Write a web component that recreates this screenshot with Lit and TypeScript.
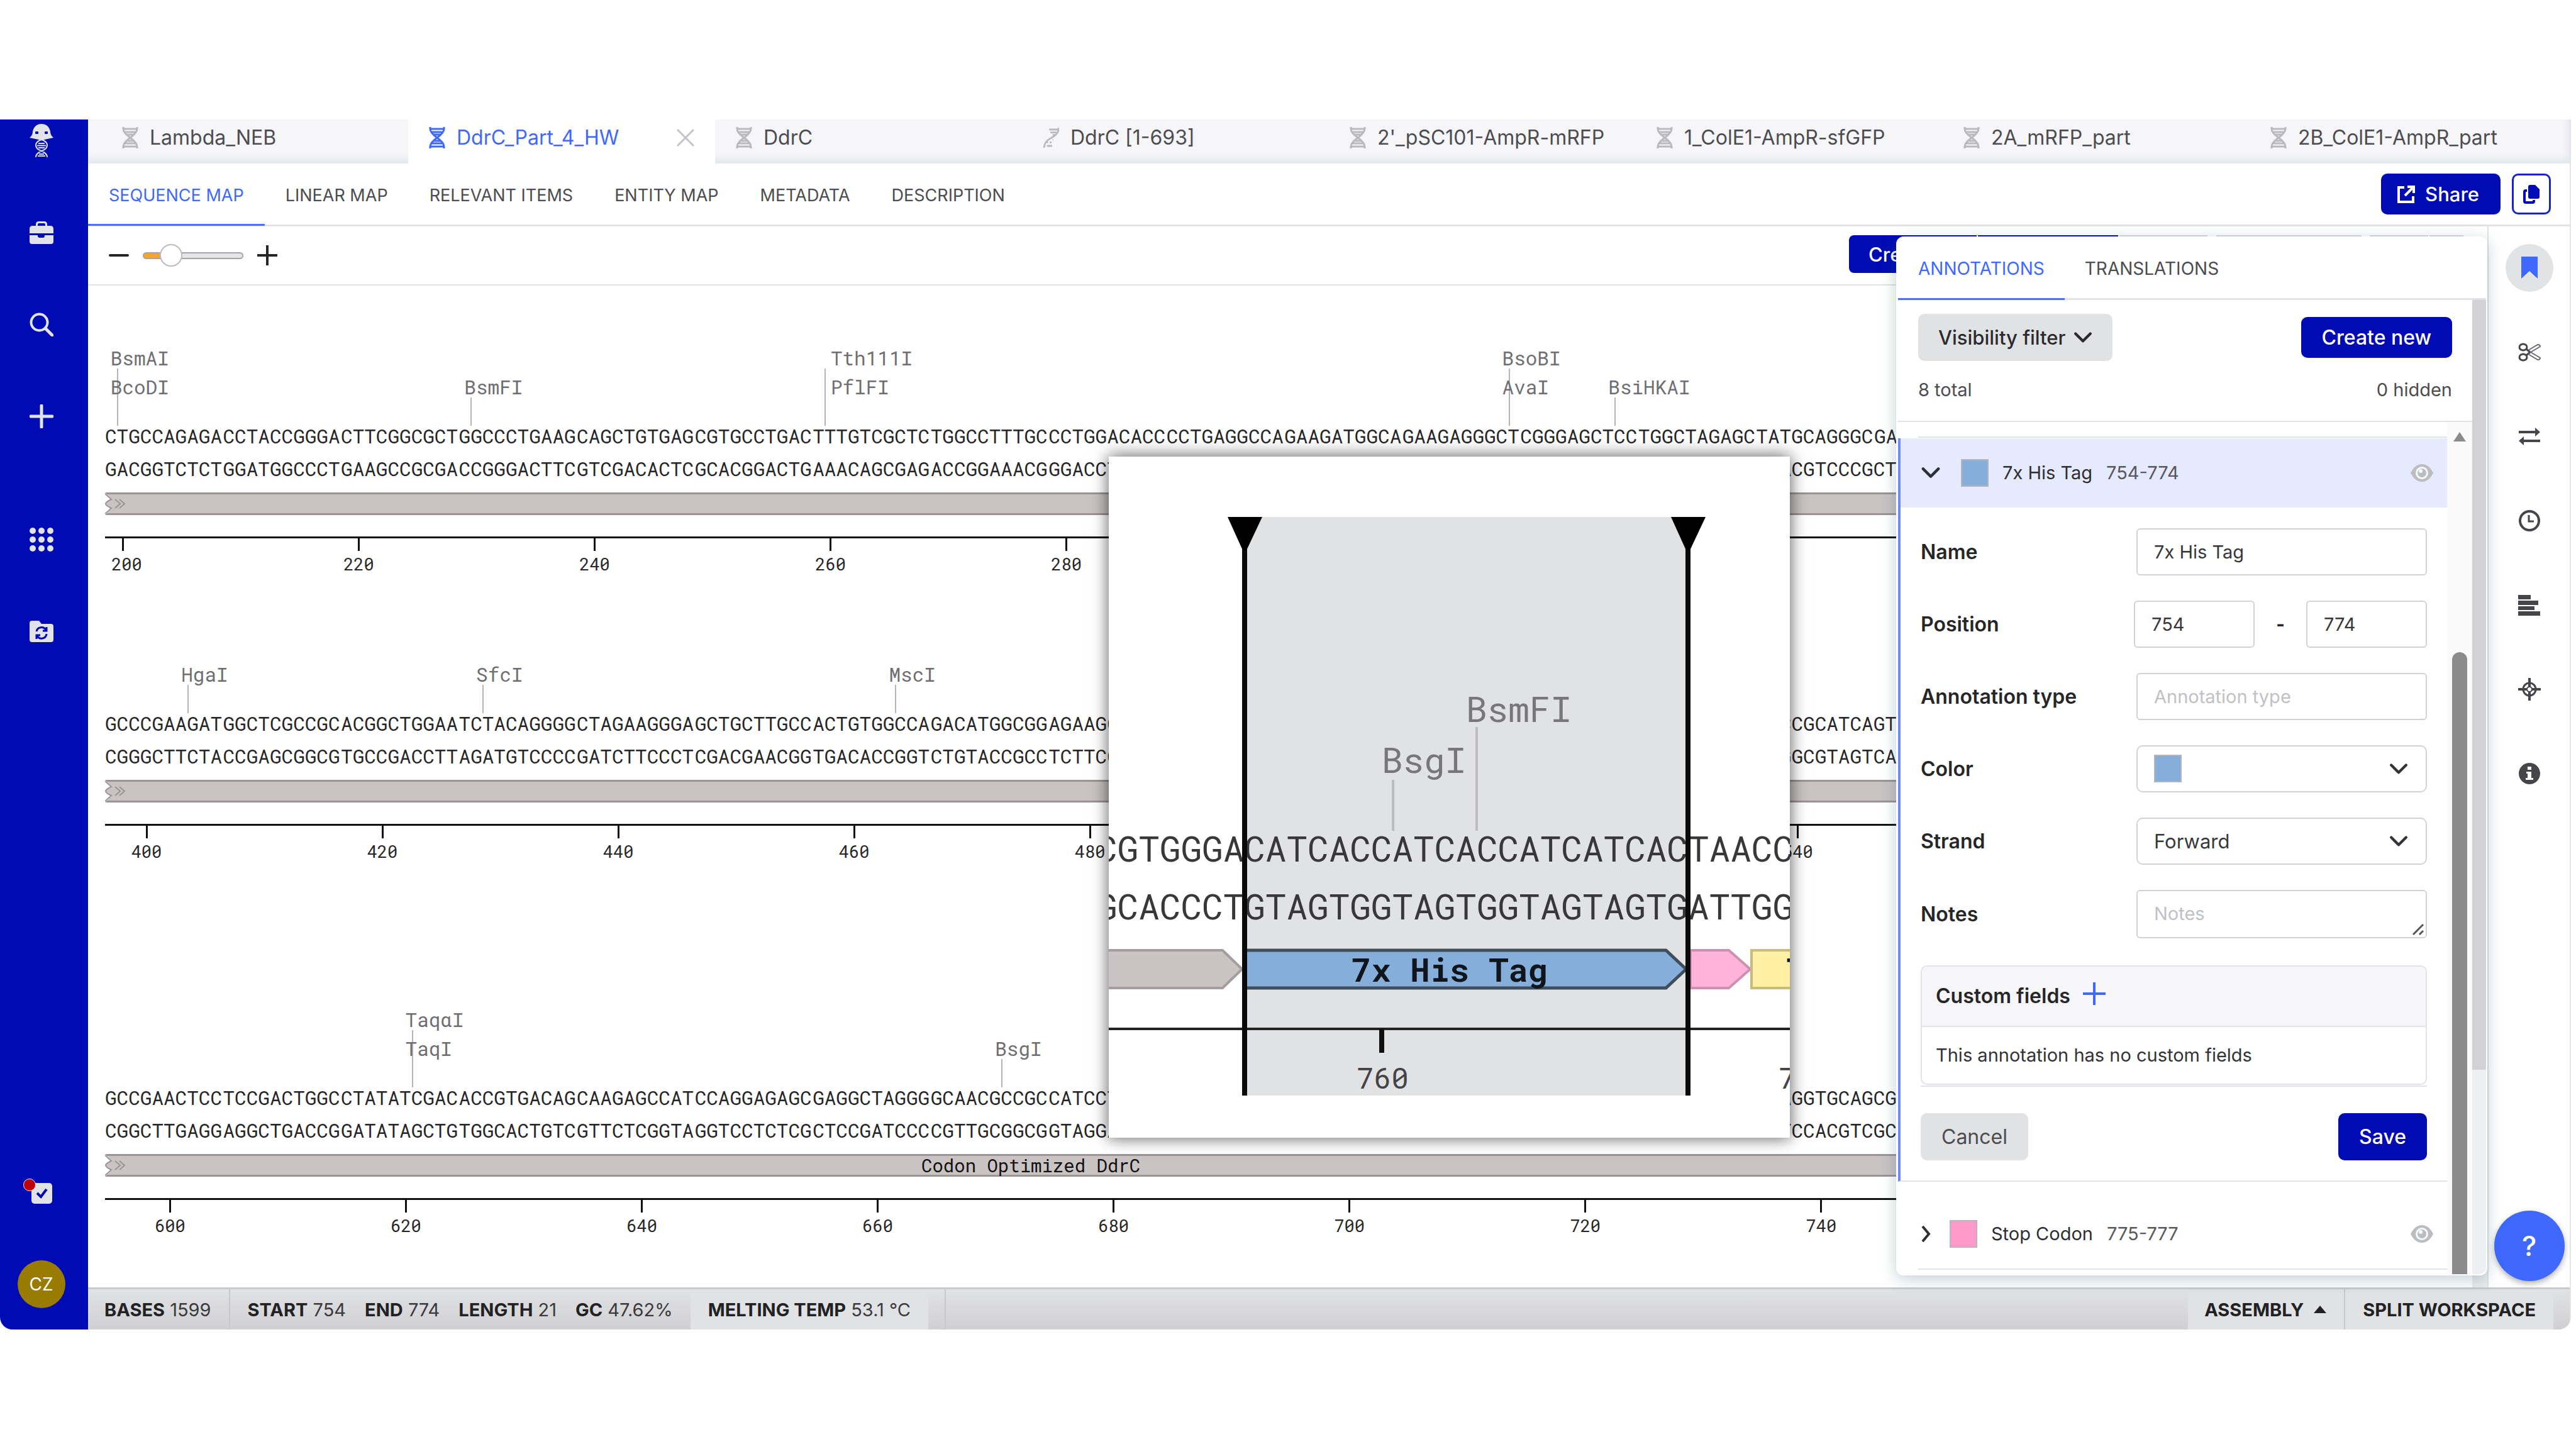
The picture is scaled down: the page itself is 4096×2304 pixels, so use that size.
import { LitElement, html, css, svg, nothing } from "lit";
import { customElement, state } from "lit/decorators.js";
import { classMap } from "lit/directives/class-map.js";

const BASES_PER_ROW = 198;

interface Site {
  at: number;
  names: string[];
  after?: boolean;
}

interface Row {
  size: string;
  top: [number, string][];
  bottom: [number, string][];
  sites: Site[];
  barSpan: number;
  barLabel?: string;
  ticks: [number, number][];
}

const PAIR: Record<string, string> = { A: "T", T: "A", C: "G", G: "C" };
const complement = (s: string) => [...s].map((b) => PAIR[b]).join("");

const ROW_1 =
  "CTGCCAGAGACCTACCGGGACTTCGGCGCTGGCCCTGAAGCAGCTGTGAGCGTGCCTGACTTTGTCGCTCTGGCCTTTGC" +
  "CCTGGACACCCCTGAGGCCAGAAGATGGCAGAAGAGGGCTCGGGAGCTCCTGGCTAGAGCTATGCAGGGCGA";
const ROW_2 =
  "GCCCGAAGATGGCTCGCCGCACGGCTGGAATCTACAGGGGCTAGAAGGGAGCTGCTTGCCACTGTGGCCAGACATGGCGGAGAAGC";
const ROW_3 =
  "GCCGAACTCCTCCGACTGGCCTATATCGACACCGTGACAGCAAGAGCCATCCAGGAGAGCGAGGCTAGGGGCAACGCCGCCATCCT";

const pairStrand = (parts: [number, string][]): [number, string][] =>
  parts.map(([start, s]) => [start, complement(s)]);

const ROW_2_PARTS: [number, string][] = [[0, ROW_2], [142, "CCGCATCAGT"]];
const ROW_3_PARTS: [number, string][] = [[0, ROW_3], [142, "AGGTGCAGCG"]];

const ROWS: Row[] = [
  {
    size: "first",
    top: [[0, ROW_1]],
    bottom: pairStrand([[0, ROW_1.slice(0, 86)], [142, ROW_1.slice(142)]]),
    sites: [
      { at: 1, names: ["BsmAI", "BcoDI"] },
      { at: 31, names: ["BsmFI"] },
      { at: 61, names: ["Tth111I", "PflFI"], after: true },
      { at: 119, names: ["BsoBI", "AvaI"] },
      { at: 128, names: ["BsiHKAI"] },
    ],
    barSpan: 198,
    ticks: [[1, 200], [21, 220], [41, 240], [61, 260], [81, 280]],
  },
  {
    size: "second",
    top: ROW_2_PARTS,
    bottom: pairStrand(ROW_2_PARTS),
    sites: [
      { at: 7, names: ["HgaI"] },
      { at: 32, names: ["SfcI"] },
      { at: 67, names: ["MscI"] },
    ],
    barSpan: 198,
    ticks: [[3, 400], [23, 420], [43, 440], [63, 460], [83, 480], [143, 540]],
  },
  {
    size: "third",
    top: ROW_3_PARTS,
    bottom: pairStrand(ROW_3_PARTS),
    sites: [
      { at: 26, names: ["TaqαI", "TaqI"] },
      { at: 76, names: ["BsgI"] },
    ],
    barSpan: 157,
    barLabel: "Codon Optimized DdrC",
    ticks: [[5, 600], [25, 620], [45, 640], [65, 660], [85, 680], [105, 700], [125, 720], [145, 740]],
  },
];

const FILES = [
  "Lambda_NEB",
  "DdrC_Part_4_HW",
  "DdrC",
  "DdrC [1-693]",
  "2'_pSC101-AmpR-mRFP",
  "1_ColE1-AmpR-sfGFP",
  "2A_mRFP_part",
  "2B_ColE1-AmpR_part",
];

const VIEWS = ["SEQUENCE MAP", "LINEAR MAP", "RELEVANT ITEMS", "ENTITY MAP", "METADATA", "DESCRIPTION"];

const helix = html`<svg class="helix" viewBox="0 0 26 34" aria-hidden="true">
  <path d="M2 0V3Q2 9 13 17Q24 25 24 31V34M24 0V3Q24 9 13 17Q2 25 2 31V34M1 3H25M4 8H22M7 12H19M7 22H19M4 26H22M1 31H25" />
</svg>`;

const halfHelix = html`<svg class="helix" viewBox="0 0 28 34" aria-hidden="true">
  <path d="M27 0V4Q26 11 15 17Q3 23 2 34M11 3H26M13 8H24M17 12H21M7 25H9M12 25H15M7 31H16M17 20H18" />
</svg>`;

const eye = html`<svg class="eye" viewBox="0 0 36 28" aria-hidden="true">
  <path d="M0 14Q7 0 18 0T36 14Q29 28 18 28T0 14Z" fill="currentColor" />
  <circle cx="18" cy="14" r="10" fill="#f7f8fc" />
  <circle cx="18" cy="14" r="7" fill="currentColor" />
  <circle cx="16" cy="11" r="3" fill="#f7f8fc" />
</svg>`;

const chevron = (cls: string) => html`<svg class=${cls} viewBox="0 0 28 18" aria-hidden="true">
  <path d="M3 3L14 14L25 3" fill="none" stroke="currentColor" stroke-width="4" stroke-linecap="round" stroke-linejoin="round" />
</svg>`;

const SIDE_ICONS = {
  logo: html`<svg viewBox="0 0 38 54" class="logo" aria-hidden="true">
    <path d="M0 22Q5 18 5 12Q8 0 19 0T33 12Q33 18 38 22Q28 24 19 26Q10 24 0 22Z" fill="#e1e3e6" />
    <rect x="9" y="12" width="5" height="4" rx="1" fill="#000bb4" />
    <rect x="24" y="12" width="5" height="4" rx="1" fill="#000bb4" />
    <path d="M19 25Q10 28 10 34T19 43Q28 47 28 53M19 25Q28 28 28 34T19 43Q10 47 10 53M14 31H24M12 34.500H26M14 38H24M15 48H23M13 51H25" fill="none" stroke="#e1e3e6" stroke-width="2" />
  </svg>`,
  projects: html`<svg viewBox="0 0 38 36" class="i38" aria-hidden="true">
    <path d="M10 7V5Q10 0 15 0H23Q28 0 28 5V7H33Q38 7 38 12V19H0V12Q0 7 5 7ZM13 7H25V5Q25 3 23 3H15Q13 3 13 5ZM0 22H13V23Q13 26 16 26H21Q24 26 24 23V22H38V32Q38 36 34 36H4Q0 36 0 32Z" fill="#e1e3e6" fill-rule="evenodd" />
  </svg>`,
  search: html`<svg viewBox="0 0 38 38" class="i38" aria-hidden="true">
    <circle cx="15.500" cy="15.500" r="13" fill="none" stroke="#e1e3e6" stroke-width="4" />
    <path d="M25 25L36 36" stroke="#e1e3e6" stroke-width="5" stroke-linecap="round" />
  </svg>`,
  create: html`<svg viewBox="0 0 38 38" class="i38" aria-hidden="true">
    <path d="M19 2V36M2 19H36" stroke="#e1e3e6" stroke-width="5" stroke-linecap="round" />
  </svg>`,
  apps: html`<svg viewBox="0 0 38 38" class="i38" aria-hidden="true">
    ${[5, 19, 33].map((y) => [5, 19, 33].map((x) => svg`<circle cx=${x} cy=${y} r="5" fill="#e1e3e6"/>`))}
  </svg>`,
  sync: html`<svg viewBox="0 0 38 34" class="i38" aria-hidden="true">
    <path d="M4 0H15L19 5H34Q38 5 38 9V30Q38 34 34 34H4Q0 34 0 30V4Q0 0 4 0Z" fill="#e1e3e6" />
    <path d="M11 17A8 8 0 0 1 26 15M27 21A8 8 0 0 1 12 24M27 10V16H21M11 29V23H17" fill="none" stroke="#000bb4" stroke-width="3" />
  </svg>`,
  tasks: html`<svg viewBox="0 0 46 40" class="tasks" aria-hidden="true">
    <rect x="13" y="7" width="33" height="33" rx="5" fill="#e1e3e6" />
    <path d="M22 23L28 29L37 17" fill="none" stroke="#000bb4" stroke-width="4" />
    <circle cx="10" cy="10" r="9.500" fill="#c00008" stroke="#e1e3e6" stroke-width="1" />
  </svg>`,
};

const RAIL_ICONS: [string, unknown][] = [
  ["Annotations", html`<svg viewBox="0 0 36 36" class="i36" aria-hidden="true"><path d="M5 0H31V35L18 23L5 35Z" fill="#3f68ff" /></svg>`],
  ["Restriction enzymes", html`<svg viewBox="0 0 36 36" class="i36" aria-hidden="true">
    <g fill="none" stroke="#45464a" stroke-width="3"><ellipse cx="8" cy="10" rx="6" ry="5" /><ellipse cx="8" cy="26" rx="6" ry="5" /><path d="M13 13L19 18L13 23" /></g>
    <g fill="none" stroke="#6d6e72" stroke-width="2"><path d="M16 15L31 6Q35 6 35 9L20 18L35 27Q35 30 31 30L16 21" /></g></svg>`],
  ["Translations", html`<svg viewBox="0 0 36 36" class="i36" aria-hidden="true"><path d="M1 9H27V4L35 11L27 18V13H1ZM35 23H9V18L1 25L9 32V27H35Z" fill="#45464a" /></svg>`],
  ["History", html`<svg viewBox="0 0 36 36" class="i36" aria-hidden="true"><circle cx="18" cy="18" r="15" fill="none" stroke="#45464a" stroke-width="4" /><path d="M17 9V19H25" fill="none" stroke="#45464a" stroke-width="3" /></svg>`],
  ["Alignments", html`<svg viewBox="0 0 36 36" class="i36" aria-hidden="true"><path d="M0 2H20V9H0ZM0 11H32V18H0ZM0 20H26V26H0ZM0 28H35V35H0Z" fill="#45464a" /></svg>`],
  ["Design", html`<svg viewBox="0 0 36 36" class="i36" aria-hidden="true"><g fill="none" stroke="#45464a"><circle cx="18" cy="18" r="10" stroke-width="3" /><path d="M18 0V14M18 22V36M0 18H14M22 18H36" stroke-width="4" /><circle cx="18" cy="18" r="4" stroke-width="2" /></g></svg>`],
  ["Information", html`<svg viewBox="0 0 36 36" class="i36" aria-hidden="true"><circle cx="18" cy="18" r="17" fill="#45464a" /><path d="M15 7H21V12H15ZM13 15H21V25H24V28H12V25H15V18H13Z" fill="#fff" /></svg>`],
];

@customElement("sequence-row")
class SequenceRow extends LitElement {
  static properties = { row: { attribute: false } };
  declare row: Row;

  static styles = css`
    :host { display: block; font-family: "Roboto Mono", "DejaVu Sans Mono", monospace; color: #262628; }
    .sites { position: relative; }
    .first { height: 213px; }
    .second { height: 212px; }
    .third { height: 350px; }
    .site { position: absolute; bottom: -10px; width: 2px; height: 45px; background: #b4b5b9; }
    .double { height: 91px; }
    .names { position: absolute; bottom: 39px; left: -10px; font-size: 31px; line-height: 46px; color: #6f6f73; white-space: nowrap; }
    .after { left: 10px; }
    .bases { display: grid; grid-template-columns: repeat(198, minmax(0, 1fr)); }
    .strand { font-size: 31px; line-height: 52px; white-space: nowrap; }
    .bar { grid-column-start: 1; position: relative; box-sizing: border-box; height: 36px; margin-top: 12px; border: solid #9a9494; border-width: 3px 0; background: #c9c3c3; display: flex; align-items: center; justify-content: center; font-size: 29px; line-height: 30px; color: #111; }
    .torn { position: absolute; left: 0; top: -3px; width: 36px; height: 36px; }
    .ruler { margin-top: 34px; border-top: 3px solid #111; height: 56px; position: relative; }
    .tick { position: absolute; top: 0; width: 3px; height: 20px; margin-left: -1px; background: #111; }
    .num { position: absolute; top: 25px; left: -23px; font-size: 27px; line-height: 32px; }
    .start { left: -17px; }
  `;

  private strand(parts: [number, string][]) {
    return html`<div class="bases strand">
      ${parts.map(([start, s]) =>
        (s.match(/.{1,10}/g) ?? []).map(
          (group, i) => html`<span style="grid-column:${start + i * 10 + 1} / span ${group.length}">${group}</span>`,
        ),
      )}
    </div>`;
  }

  render() {
    const r = this.row;
    return html`
      <div class="sites ${r.size}">
        ${r.sites.map(
          (s) => html`<div class=${classMap({ site: true, double: s.names.length > 1 })} style="left:${(s.at / BASES_PER_ROW) * 100}%">
            <div class=${classMap({ names: true, after: !!s.after })}>${s.names.map((n) => html`<div>${n}</div>`)}</div>
          </div>`,
        )}
      </div>
      ${this.strand(r.top)} ${this.strand(r.bottom)}
      <div class="bases">
        <div class="bar" style="grid-column-end:span ${r.barSpan}">
          <svg class="torn" viewBox="0 0 36 36" aria-hidden="true">
            <path d="M-2 0H0L11 11Q1 15 1 18T11 25L0 36H-2Z" fill="#fff" />
            <path d="M0 2L10 11Q1 15 1 18T10 25L0 34M16 11L24 18L16 25M23 11L31 18L23 25" fill="none" stroke="#9a9494" stroke-width="2" />
          </svg>
          ${r.barLabel ?? nothing}
        </div>
      </div>
      <div class="ruler">
        ${r.ticks.map(
          ([at, n]) => html`<div class="tick" style="left:${((at + 0.5) / BASES_PER_ROW) * 100}%">
            <span class=${classMap({ num: true, start: at < 2 })}>${n}</span>
          </div>`,
        )}
      </div>
    `;
  }
}

@customElement("selection-lens")
class SelectionLens extends LitElement {
  static styles = css`
    :host { display: block; background: #fff; box-shadow: 0 -2px 26px rgba(0, 0, 0, 0.5), 0 4px 20px rgba(0, 0, 0, 0.2); }
    svg { display: block; width: 100%; }
    text { font-family: "Roboto Mono", "DejaVu Sans Mono", monospace; font-size: 56px; fill: #38383b; }
    .site { fill: #77777b; }
    .tag { font-size: 52px; font-weight: 700; fill: #10151c; }
    .num { font-size: 46px; fill: #444447; }
  `;

  render() {
    return html`<svg viewBox="0 0 1083 1083" role="img" aria-label="Selected bases 754 to 774">
      <rect x="216" y="96" width="705" height="920" fill="#e1e2e4" />
      <path d="M452 514V595M585 430V595" stroke="#bcbcbf" stroke-width="4" />
      <text class="site" x="568" y="422">BsmFI</text>
      <text class="site" x="434" y="503">BsgI</text>
      <text x="-20" y="644">CGTGGGACATCACCATCACCATCATCACTAACC</text>
      <text x="-20" y="736">GCACCCTGTAGTGGTAGTGGTAGTAGTGATTGG</text>
      <path d="M-4 785H181L212 815L181 845H-4Z" fill="#c9c3c3" stroke="#a39d9d" stroke-width="4" />
      <path d="M216 785H886L918 815L886 845H216Z" fill="#85aedb" stroke="#3f4d5c" stroke-width="5" />
      <path d="M925 785H986L1020 815L986 845H925Z" fill="#ffb3d9" stroke="#cf8fb0" stroke-width="4" />
      <rect x="1022" y="785" width="70" height="60" fill="#fff0a6" stroke="#c9bc78" stroke-width="4" />
      <text class="tag" x="386" y="835">7x His Tag</text>
      <text class="tag" x="1078" y="835">T</text>
      <path d="M0 910H1083" stroke="#222" stroke-width="4" />
      <path d="M434 910V948" stroke="#111" stroke-width="8" />
      <text class="num" x="394" y="1005">760</text>
      <text class="num" x="1065" y="1005">7</text>
      <path d="M216 96V1016M921 96V1016" stroke="#0a0a0a" stroke-width="8" />
      <path d="M189 96H244L219 149H213ZM894 96H949L924 149H918Z" fill="#000" />
    </svg>`;
  }
}

@customElement("annotation-panel")
class AnnotationPanel extends LitElement {
  static styles = css`
    :host { display: flex; flex-direction: column; box-sizing: border-box; background: #fff; border-radius: 12px; border: solid #fff; border-width: 0 2px 2px 3px; box-shadow: 0 6px 24px rgba(30, 90, 100, 0.28); overflow: hidden; font-size: 29px; line-height: 40px; color: #333338; }
    button, input, select, textarea { font: inherit; color: inherit; margin: 0; }
    button { cursor: pointer; }
    .tabs { display: flex; border-bottom: 3px solid #e1e3e6; }
    .tab { border: 0; background: none; padding: 4px 32px 0; height: 101px; font-size: 28px; color: #4c4c51; border-bottom: 3px solid transparent; margin-bottom: -3px; }
    .tab.on { color: #3f68ff; border-color: #4a70ff; }
    .outer { flex: 1; min-height: 0; display: flex; }
    .content { flex: 1; min-width: 0; display: flex; flex-direction: column; }
    .track { width: 22px; background: #eeeff1; }
    .track div { height: 79%; background: #d2d2d5; }
    .head { padding: 22px 32px 0; height: 170px; display: flex; flex-direction: column; gap: 26px; border-bottom: 2px solid #e1e3e6; }
    .line { display: flex; align-items: center; justify-content: space-between; color: #4c4c51; }
    .btn { border: 0; border-radius: 10px; font-size: 32px; padding: 0 33px; height: 75px; background: #e1e2e4; color: #4c4c51; display: flex; align-items: center; gap: 12px; }
    .filter { color: #2b2b2f; font-weight: 500; font-size: 31px; padding: 0 32px; }
    .primary { background: #000bb4; color: #fff; font-weight: 500; }
    .short { height: 65px; }
    .list { flex: 1; min-height: 0; display: flex; }
    .items { flex: 1; min-width: 0; overflow: hidden; }
    .rule { margin: 23px 0 0 32px; border-top: 2px solid #e1e3e6; height: 1px; }
    .open { border-left: 4px solid #7089ff; border-bottom: 2px solid #e1e3e6; }
    .title { display: flex; align-items: center; }
    .open .title { height: 110px; background: #e6eafe; padding: 0 22px 0 32px; }
    .next { height: 110px; margin-left: 32px; padding: 28px 22px 0 4px; border-bottom: 2px solid #e1e3e6; }
    .toggle { border: 0; background: none; padding: 0; display: flex; align-items: center; height: 44px; color: #2f2f33; text-align: left; }
    .swatch { width: 40px; height: 40px; border: 2px solid #b5b5ba; background: #85aedb; }
    .pink { background: #ff9acb; }
    .open .toggle .swatch { margin: 0 22px 0 32px; }
    .next .swatch { margin: 0 22px 0 30px; }
    .range { margin-left: 22px; color: #58585d; }
    .see { margin-left: auto; border: 0; background: none; padding: 0; color: #bcbdc1; display: flex; }
    .eye { width: 36px; height: 28px; }
    .down { width: 32px; height: 20px; }
    .mid { width: 30px; height: 20px; }
    .right { width: 16px; height: 28px; }
    form { padding: 33px 32px 32px; display: flex; flex-direction: column; }
    .fields { display: grid; grid-template-columns: 343px minmax(0, 1fr); gap: 40px 0; align-items: center; }
    label, .cap { font-weight: 600; font-size: 32px; color: #262629; }
    input, select, textarea { display: block; box-sizing: border-box; width: 100%; height: 75px; border: 2px solid #d2d3d6; border-radius: 6px; padding: 0 26px; background: #fff; outline: 0; color: #38383c; appearance: none; }
    select { border-radius: 10px; font-size: 31px; }
    textarea { height: 77px; padding: 16px 26px; resize: none; overflow: hidden; }
    ::placeholder { color: #c0c1c5; opacity: 1; }
    .pos { display: flex; align-items: center; justify-content: space-between; margin-left: -4px; font-weight: 700; color: #262629; }
    .pos input { width: 192px; font-weight: 400; }
    .wrap { position: relative; }
    .wrap .swatch { position: absolute; left: 28px; top: 15px; }
    .wrap .mid { position: absolute; right: 30px; top: 28px; pointer-events: none; }
    .grip { position: absolute; right: 4px; bottom: 4px; width: 20px; height: 20px; }
    .card { margin-top: 43px; border: 2px solid #e1e3e6; border-radius: 10px; overflow: hidden; }
    .card header { background: #f6f6f9; border-bottom: 2px solid #e1e3e6; height: 94px; padding: 0 22px; display: flex; align-items: center; gap: 20px; }
    .card p { margin: 0; padding: 25px 22px; }
    .add { border: 0; background: none; padding: 0 0 8px; display: flex; }
    .add svg { width: 36px; height: 36px; }
    .under { border-top: 2px solid #e1e3e6; margin-top: 1px; }
    .actions { display: flex; justify-content: space-between; margin-top: 42px; }
    .bar { width: 40px; background: #fafafa; display: flex; flex-direction: column; align-items: center; }
    .bar svg { width: 20px; height: 15px; margin: 16px 0 0; }
    .bar div { width: 24px; flex: 1; margin: 335px 0 0; background: #8b8b8b; border-radius: 12px 12px 0 0; }
  `;

  render() {
    return html`
      <div class="tabs">
        <button class="tab on">ANNOTATIONS</button>
        <button class="tab">TRANSLATIONS</button>
      </div>
      <div class="outer">
        <div class="content">
          <div class="head">
            <div class="line">
              <button class="btn filter">Visibility filter ${chevron("mid")}</button>
              <button class="btn primary short">Create new</button>
            </div>
            <div class="line"><span>8 total</span><span>0 hidden</span></div>
          </div>
          <div class="list">
            <div class="items">
              <div class="rule"></div>
              <section class="open">
                <div class="title">
                  <button class="toggle">${chevron("down")}<span class="swatch"></span>7x His Tag</button>
                  <span class="range">754-774</span>
                  <button class="see" aria-label="Hide 7x His Tag">${eye}</button>
                </div>
                <form @submit=${(e: Event) => e.preventDefault()}>
                  <div class="fields">
                    <label for="name">Name</label>
                    <input id="name" .value=${"7x His Tag"} />
                    <label for="from">Position</label>
                    <div class="pos">
                      <input id="from" .value=${"754"} />-<input aria-label="Position end" .value=${"774"} />
                    </div>
                    <label for="type">Annotation type</label>
                    <input id="type" placeholder="Annotation type" />
                    <label for="color">Color</label>
                    <div class="wrap">
                      <select id="color"><option value="#85aedb" aria-label="Blue"></option></select>
                      <span class="swatch"></span>${chevron("mid")}
                    </div>
                    <label for="strand">Strand</label>
                    <div class="wrap">
                      <select id="strand"><option>Forward</option></select>${chevron("mid")}
                    </div>
                    <label for="notes">Notes</label>
                    <div class="wrap">
                      <textarea id="notes" placeholder="Notes"></textarea>
                      <svg class="grip" viewBox="0 0 20 20" aria-hidden="true"><path d="M2 18L18 2M12 18L18 12" stroke="#55565a" stroke-width="3" /></svg>
                    </div>
                  </div>
                  <div class="card">
                    <header>
                      <span class="cap">Custom fields</span>
                      <button class="add" type="button" aria-label="Add custom field">
                        <svg viewBox="0 0 36 36" aria-hidden="true"><path d="M18 0V36M0 18H36" stroke="#3f68ff" stroke-width="4" /></svg>
                      </button>
                    </header>
                    <p>This annotation has no custom fields</p>
                  </div>
                  <div class="under"></div>
                  <div class="actions">
                    <button class="btn" type="button">Cancel</button>
                    <button class="btn primary">Save</button>
                  </div>
                </form>
              </section>
              <section class="title next">
                <button class="toggle">
                  <svg class="right" viewBox="0 0 16 28" aria-hidden="true"><path d="M3 2L13 14L3 26" fill="none" stroke="currentColor" stroke-width="4" /></svg>
                  <span class="swatch pink"></span>Stop Codon
                </button>
                <span class="range">775-777</span>
                <button class="see" aria-label="Hide Stop Codon">${eye}</button>
              </section>
            </div>
            <div class="bar">
              <svg viewBox="0 0 20 15" aria-hidden="true"><path d="M10 0L20 15H0Z" fill="#8b8b8b" /></svg>
              <div></div>
            </div>
          </div>
        </div>
        <div class="track"><div></div></div>
      </div>
    `;
  }
}

@customElement("app-root")
class AppRoot extends LitElement {
  @state() private zoom = 21;

  static styles = css`
    :host { display: block; box-sizing: border-box; min-height: 100vh; padding: 190px 8px 190px 0; background: #fff; font-family: Inter, "Liberation Sans", sans-serif; font-size: 29px; color: #4c4c51; }
    button { font: inherit; color: inherit; border: 0; background: none; margin: 0; padding: 0; cursor: pointer; }
    .app { display: flex; height: calc(100vh - 380px); border-radius: 0 0 20px 20px; overflow: hidden; }
    .side { width: 140px; flex: none; box-sizing: border-box; background: #000bb4; padding: 2px 9px 34px 0; display: flex; flex-direction: column; align-items: center; gap: 82px; }
    .side button, .side a { height: 64px; display: flex; align-items: center; }
    .side .gap { margin-top: 50px; }
    .foot { margin-top: auto; display: flex; flex-direction: column; align-items: center; gap: 78px; }
    .side .avatar { width: 76px; height: 76px; border-radius: 50%; background: #987b00; color: #fff; font-size: 28px; justify-content: center; }
    .i38 { width: 38px; }
    .logo { width: 38px; height: 54px; }
    .tasks { width: 46px; margin-right: 12px; }
    .i36 { width: 36px; height: 36px; }
    .main { flex: 1; min-width: 0; display: flex; flex-direction: column; border-right: 2px solid #e4e5e9; }
    .files { display: flex; flex: none; height: 70px; padding: 0 21px; background: linear-gradient(#f6f6f9 54px, #e3e8eb); box-shadow: inset -10px 0 10px -6px #e3e8eb; }
    .file { flex: 1 1 0; min-width: 0; box-sizing: border-box; display: flex; align-items: center; gap: 18px; padding: 0 33px 13px 33px; font-size: 32px; white-space: nowrap; }
    .file.on { background: #fff; color: #3f68ff; }
    .helix { width: 26px; height: 34px; flex: none; fill: none; stroke: #b9bac0; stroke-width: 3; }
    .on .helix { stroke: #3f68ff; }
    .close { margin-left: auto; display: flex; }
    .close svg { width: 28px; height: 28px; }
    .views { display: flex; flex: none; align-items: center; height: 97px; border-bottom: 3px solid #e1e3e6; padding-right: 30px; gap: 18px; }
    .nav { display: flex; flex: 1; }
    .nav button { padding: 3px 33px 0; height: 101px; box-sizing: border-box; font-size: 27px; border: solid transparent; border-width: 3px 0; }
    .nav .on { color: #3f68ff; border-bottom-color: #4a70ff; }
    .views > button { height: 65px; box-sizing: border-box; border-radius: 10px; display: flex; align-items: center; justify-content: center; }
    .share { background: #000bb4; color: #fff; font-size: 31px; font-weight: 500; gap: 16px; padding: 0 34px 0 26px; }
    .share svg { width: 28px; height: 28px; }
    .copy { width: 62px; border: 3px solid #1a25bd; }
    .copy svg { width: 26px; height: 30px; }
    .body { flex: 1; min-height: 0; display: flex; position: relative; }
    .map { flex: 1; min-width: 0; display: flex; flex-direction: column; }
    .tools { display: flex; flex: none; align-items: center; height: 92px; border-bottom: 2px solid #dfe3e3; padding-left: 33px; padding-right: 14px; }
    .tools > button svg { width: 32px; height: 32px; display: block; }
    .zoom { appearance: none; width: 160px; height: 36px; margin: 0 22px; background: none; outline: 0; }
    .zoom::-webkit-slider-runnable-track { height: 11px; box-sizing: border-box; border: 2px solid #a5a5a8; border-radius: 6px; background: linear-gradient(90deg, #f5a623 27%, #e6e6e8 27%); }
    .zoom::-webkit-slider-thumb { appearance: none; width: 36px; height: 36px; box-sizing: border-box; margin-top: -15px; border: 2px solid #bdbdc0; border-radius: 50%; background: #fff; }
    .group { margin-left: auto; margin-top: -4px; display: flex; gap: 2px; height: 60px; }
    .group .make { width: 203px; border-radius: 8px 0 0 8px; background: #000bb4; color: #fff; font-size: 31px; font-weight: 500; text-align: left; padding-left: 31px; }
    .group i { background: #d7dadd; }
    .group .blue { width: 223px; background: #000bb4; }
    .g1 { width: 140px; margin-right: 12px; }
    .g2 { width: 231px; margin-right: 11px; }
    .g3 { width: 93px; }
    .g4 { width: 54px; }
    .canvas { position: relative; padding: 0 51px 0 27px; }
    .lens { position: absolute; left: 1623px; top: 272px; width: 1083px; height: 1083px; }
    .gutter { width: 24px; background: linear-gradient(#fff 50%, #e9ebec 50%); }
    .panel { position: absolute; right: 131px; top: 16px; bottom: 19px; width: 940px; }
    .rail { width: 131px; flex: none; box-sizing: border-box; border-left: 2px solid #e1e3e6; display: flex; flex-direction: column; align-items: center; gap: 58px; padding: 28px 0 10px; }
    .rail button { width: 76px; height: 76px; flex: none; border-radius: 50%; display: flex; align-items: center; justify-content: center; }
    .rail .on { background: #e1e3e5; }
    .rail .help { margin-top: auto; width: 112px; height: 112px; background: #3f68ff; color: #fff; font-size: 44px; font-weight: 500; box-shadow: 0 4px 10px rgba(0, 0, 0, 0.3); }
    .status { flex: none; display: flex; height: 64px; border-top: 3px solid #c6cacd; background: linear-gradient(#e1e2e4, #d0d0d2); color: #3a3a3d; white-space: nowrap; }
    .cell { display: flex; align-items: center; gap: 30px; padding: 0 28px; }
    .cell:first-child { padding-left: 26px; }
    .cell b { font-weight: 700; color: #222225; }
    .line { border-right: 2px solid #c6c8cb; }
    .lit { background: #e1e2e4; }
    .stub { width: 26px; }
    .end { margin-left: auto; margin-right: 26px; display: flex; }
    .end button { font-weight: 700; color: #222225; gap: 16px; padding: 0 28px; }
    .end svg { width: 20px; height: 12px; }
  `;

  render() {
    return html`
      <div class="app">
        <nav class="side" aria-label="Main">
          <a href="#" aria-label="Home">${SIDE_ICONS.logo}</a>
          <button aria-label="Projects">${SIDE_ICONS.projects}</button>
          <button aria-label="Search">${SIDE_ICONS.search}</button>
          <button aria-label="Create">${SIDE_ICONS.create}</button>
          <button class="gap" aria-label="Applications">${SIDE_ICONS.apps}</button>
          <button aria-label="Synced folders">${SIDE_ICONS.sync}</button>
          <div class="foot">
            <button aria-label="Tasks">${SIDE_ICONS.tasks}</button>
            <button class="avatar">CZ</button>
          </div>
        </nav>
        <main class="main">
          <div class="files">
            ${FILES.map(
              (f, i) => html`<div class=${classMap({ file: true, on: i === 1 })}>
                ${i === 3 ? halfHelix : helix}<span>${f}</span>
                ${i === 1
                  ? html`<button class="close" aria-label="Close">
                      <svg viewBox="0 0 28 28" aria-hidden="true"><path d="M1 1L27 27M27 1L1 27" stroke="#c4c5ca" stroke-width="3" /></svg>
                    </button>`
                  : nothing}
              </div>`,
            )}
          </div>
          <div class="views">
            <div class="nav">${VIEWS.map((v, i) => html`<button class=${classMap({ on: i === 0 })}>${v}</button>`)}</div>
            <button class="share">
              <svg viewBox="0 0 28 28" aria-hidden="true"><path d="M11 3H2V26H25V17M16 2H26V12M26 2L12 16" fill="none" stroke="#fff" stroke-width="4" /></svg>
              Share
            </button>
            <button class="copy" aria-label="Copy">
              <svg viewBox="0 0 26 30" aria-hidden="true"><path d="M11 0H19L26 7V19Q26 22 23 22H11Q8 22 8 19V3Q8 0 11 0Z" fill="#000bb4" /><path d="M6 9H4Q2 9 2 11V26Q2 28 4 28H15Q17 28 17 26V24" fill="none" stroke="#000bb4" stroke-width="4" /></svg>
            </button>
          </div>
          <div class="body">
            <div class="map">
              <div class="tools">
                <button aria-label="Zoom out"><svg viewBox="0 0 32 32" aria-hidden="true"><path d="M2 16H30" stroke="#262628" stroke-width="4" stroke-linecap="round" /></svg></button>
                <input class="zoom" type="range" min="0" max="100" .value=${String(this.zoom)} aria-label="Zoom" />
                <button aria-label="Zoom in"><svg viewBox="0 0 32 32" aria-hidden="true"><path d="M16 1V31M1 16H31" stroke="#262628" stroke-width="4" stroke-linecap="round" /></svg></button>
                <div class="group">
                  <button class="make">Create</button><i class="blue"></i><i class="g1"></i><i class="g2"></i><i class="g3"></i><i class="g4"></i>
                </div>
              </div>
              <div class="canvas">
                ${ROWS.map((r) => html`<sequence-row .row=${r}></sequence-row>`)}
                <selection-lens class="lens"></selection-lens>
              </div>
            </div>
            <div class="gutter"></div>
            <div class="rail">
              ${RAIL_ICONS.map(([name, icon], i) => html`<button class=${classMap({ on: i === 0 })} aria-label=${name}>${icon}</button>`)}
              <button class="help" aria-label="Help">?</button>
            </div>
            <annotation-panel class="panel"></annotation-panel>
          </div>
          <footer class="status">
            <div class="cell line"><span><b>BASES</b> 1599</span></div>
            <div class="cell">
              <span><b>START</b> 754</span><span><b>END</b> 774</span><span><b>LENGTH</b> 21</span><span><b>GC</b> 47.62%</span>
            </div>
            <div class="cell lit"><span><b>MELTING TEMP</b> 53.1 °C</span></div>
            <div class="stub line"></div>
            <div class="end">
              <button class="cell lit line">ASSEMBLY <svg viewBox="0 0 20 12" aria-hidden="true"><path d="M10 0L20 12H0Z" fill="#222225" /></svg></button>
              <button class="cell lit">SPLIT WORKSPACE</button>
            </div>
          </footer>
        </main>
      </div>
    `;
  }
}
